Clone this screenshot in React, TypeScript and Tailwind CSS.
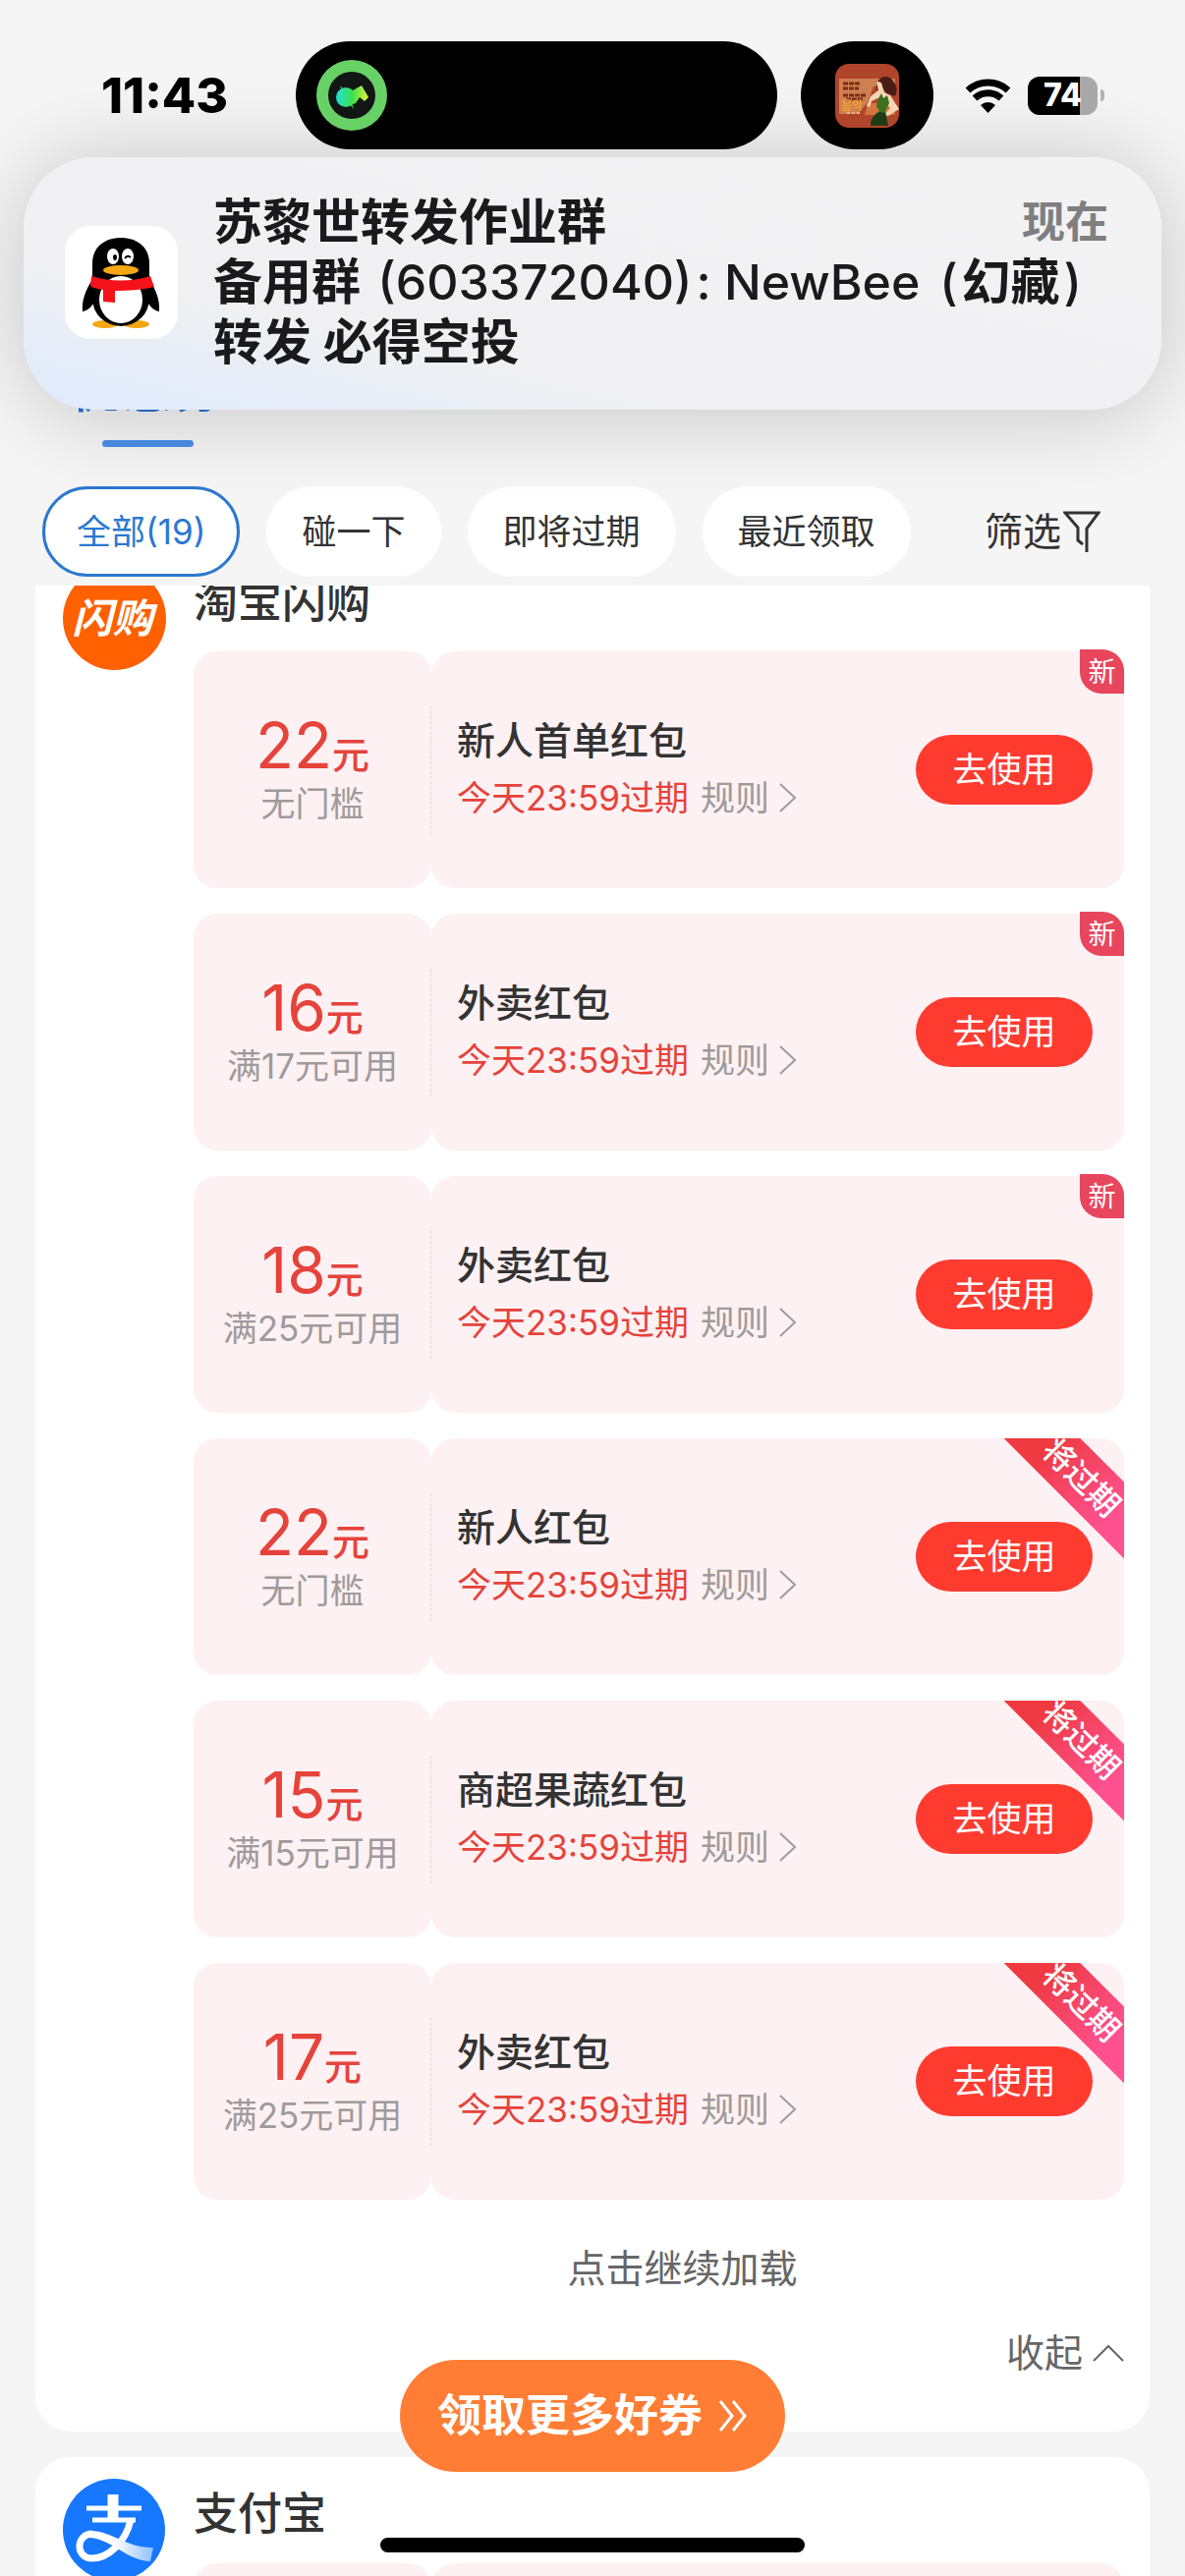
import { useState } from "react";

type Coupon = {
  amount: number;
  condition: string;
  title: string;
  tag: "new" | "expiring";
};

const coupons: Coupon[] = [
  { amount: 22, condition: "无门槛", title: "新人首单红包", tag: "new" },
  { amount: 16, condition: "满17元可用", title: "外卖红包", tag: "new" },
  { amount: 18, condition: "满25元可用", title: "外卖红包", tag: "new" },
  { amount: 22, condition: "无门槛", title: "新人红包", tag: "expiring" },
  { amount: 15, condition: "满15元可用", title: "商超果蔬红包", tag: "expiring" },
  { amount: 17, condition: "满25元可用", title: "外卖红包", tag: "expiring" },
];

const filters = ["全部(19)", "碰一下", "即将过期", "最近领取"];

function StatusBar() {
  return (
    <div className="relative z-20 flex items-center pt-[42px] pl-[103px] pr-[82px]">
      <div className="w-[198px] text-[50px] leading-[56px] font-extrabold text-black">11:43</div>

      {/* Dynamic island */}
      <div className="flex h-[110px] flex-1 items-center rounded-full bg-black pl-[21px]">
        <svg viewBox="0 0 72 72" className="size-[72px]">
          <defs>
            <linearGradient id="fish" x1="20" x2="54" gradientUnits="userSpaceOnUse">
              <stop offset="0" stopColor="#1fe0d8" />
              <stop offset="0.5" stopColor="#3fe04a" />
              <stop offset="1" stopColor="#f0f53a" />
            </linearGradient>
          </defs>
          <circle cx="36" cy="36" r="36" fill="#68d166" />
          <circle cx="36" cy="36" r="24" fill="#121614" />
          <g fill="url(#fish)">
            <circle cx="30" cy="38" r="10" />
            <path d="M34 32l3-1 9-5 7 12-4 4-5-4-4 6-6 2z" />
            <path d="M24 26l5 6h-3zM38 50l-5-6h3z" />
          </g>
        </svg>
      </div>
      <div className="ml-6 flex h-[110px] w-[135px] items-center justify-center rounded-full bg-black">
        <svg viewBox="0 0 65 65" className="size-[65px] rounded-[14px]">
          <rect width="65" height="65" fill="#b0452c" />
          <path d="M4 15h57v6l-22 2-6 16-10 12H4z" fill="#cd8050" />
          <path d="M33 40h28v12H30z" fill="#d4743f" />
          <path d="M8 20h18M8 25h16M8 32h24M11 36h18" stroke="#7d2b1d" strokeWidth="3" strokeDasharray="5 1" />
          <text x="6" y="47" fontSize="12" fontWeight="700" fill="#f0a233" fontFamily="Noto Sans CJK KR, sans-serif">
            음악
          </text>
          <path d="M12 50h14" stroke="#e8b08a" strokeWidth="2" strokeDasharray="3 2" />
          <path d="M44 17c3-6 13-5 15 1 5 5 4 10 2 15l-9-3-4-6-5 3c-2-3-1-7 1-10z" fill="#4a1d16" />
          <path d="M42 19c3-2 6 0 6 4l2 6 6 3 9 14-11 7-4-1 6-7-5-6-8-4-6 3-2 6-3-1 4-10 8-6z" fill="#f6d6b4" />
          <path d="M44 35l3-5 2 5 4-3 2 8-4 8 3 15H36c0-8 4-12 9-15l-3-5z" fill="#3c6f1f" />
          <path d="M36 63c0-8 4-11 9-14l6 1 3 13z" fill="#1f3a14" />
        </svg>
      </div>

      <svg viewBox="0 0 47 36" className="ml-8 h-9 w-[47px]">
        <path d="M3 13a30 30 0 0 1 41 0" fill="none" stroke="#000" strokeWidth="7" />
        <path d="M10 21a20 20 0 0 1 27 0" fill="none" stroke="#000" strokeWidth="7" />
        <path d="M16 28a11 11 0 0 1 15 0l-7.500 8z" fill="#000" />
      </svg>
      <div className="ml-[17px] flex h-[39px] w-[71px] items-center justify-center rounded-xl bg-linear-to-r from-black from-75% to-[#a8a8a8] to-75% text-[32px] leading-none font-extrabold text-white">
        74
      </div>
      <div className="ml-[3px] h-3 w-1 rounded-r-full bg-[#b4b4b4]" />
    </div>
  );
}

function Notification() {
  return (
    <div className="absolute inset-x-6 top-[160px] z-10 flex items-center rounded-[72px] bg-linear-to-tr from-[#deeafd] via-[#f0f0f2] via-30% to-[#f3f3f4] pt-9 pr-[54px] pb-[38px] pl-[42px] shadow-[0_4px_90px_rgba(0,0,0,0.2)]">
      <svg viewBox="0 0 115 115" className="size-[115px] shrink-0 rounded-[26px] bg-white">
        <ellipse cx="41" cy="100" rx="13" ry="4" fill="#f5a613" />
        <ellipse cx="73" cy="100" rx="13" ry="4" fill="#f5a613" />
        <path d="M27 56c-6 10-10 20-9 31 6-1 11-6 15-16zM87 56c6 10 10 20 9 31-6-1-11-6-15-16z" fill="#000" />
        <ellipse cx="57" cy="74" rx="29" ry="28" fill="#000" />
        <path d="M28 60V38c0-16 12-26 29-26s29 10 29 26v22z" fill="#000" />
        <ellipse cx="57" cy="75" rx="22" ry="24" fill="#fff" />
        <ellipse cx="49" cy="31" rx="6" ry="8" fill="#fff" />
        <ellipse cx="64" cy="31" rx="6" ry="8" fill="#fff" />
        <ellipse cx="51" cy="32" rx="2" ry="3" fill="#000" />
        <path d="M61 33q3-4 6-1" fill="none" stroke="#000" strokeWidth="2" />
        <ellipse cx="57" cy="45" rx="18" ry="5" fill="#f5a613" />
        <path d="M27 51q30 9 60 0l4 11q-16 4-40 4v12l-12-1V65q-8-1-13-4z" fill="#f5121a" />
      </svg>
      <div className="ml-9 flex-1 text-[50px] leading-[61px] font-bold text-[#1a1a1c]">
        <div className="flex items-center justify-between">
          <h2>苏黎世转发作业群</h2>
          <span className="text-[44px] font-semibold text-[#7f7f81]">现在</span>
        </div>
        <p>
          备用群
          <span className="pr-1 pl-1 font-medium"> (603372040)</span>
          <span className="pr-2 font-medium">: NewBee</span> <span className="font-medium">(</span>
          <span className="px-1">幻藏</span>
          <span className="font-medium">)</span>
          <br />
          转发 必得空投
        </p>
      </div>
    </div>
  );
}

function CouponCard({ coupon }: { coupon: Coupon }) {
  return (
    <li className="relative flex h-[241px]">
      <div className="flex w-[242px] flex-col items-center justify-center rounded-3xl bg-[#fdf1f3] pt-1">
        <div className="flex items-baseline text-[#e5433b]">
          <span className="text-[64px] leading-[64px]">{coupon.amount}</span>
          <span className="text-[38px] leading-none font-medium">元</span>
        </div>
        <div className="text-[35px] leading-[54px] text-[#9f9a9b]">{coupon.condition}</div>
      </div>

      <div className="relative flex flex-1 items-center justify-between overflow-hidden rounded-3xl bg-[#fdf1f3] pr-8 pl-[26px]">
        <div className="pb-[2px]">
          <h3 className="text-[39px] leading-[58px] font-medium text-[#333]">{coupon.title}</h3>
          <div className="flex items-center text-[35px] leading-[58px]">
            <span className="text-[#e5433b]">今天23:59过期</span>
            <a href="#rules" className="ml-3 flex items-center gap-[10px] text-[#9f9a9b]">
              规则
              <svg viewBox="0 0 18 30" className="h-[30px] w-[18px]">
                <path d="M1 1l15 14L1 29" fill="none" stroke="currentColor" strokeWidth="2" />
              </svg>
            </a>
          </div>
        </div>
        <button className="h-[71px] w-[180px] rounded-full bg-[#ff3b30] text-[35px] text-white">去使用</button>

        {coupon.tag === "expiring" && (
          <span className="absolute top-[14px] -right-[78px] flex h-[55px] w-[240px] rotate-45 items-center justify-center bg-linear-to-r from-[#ee3a40] from-30% to-[#ff5090] to-70% pr-1 text-[32px] font-medium text-white">
            将过期
          </span>
        )}
      </div>

      <div className="absolute top-14 left-[241px] h-[130px] border-l border-dashed border-[#e2d6d8]" />
      {coupon.tag === "new" && (
        <span className="absolute -top-[2px] right-0 flex size-[45px] items-center justify-center rounded-tr-[22px] rounded-bl-[22px] bg-[#e8465c] text-[28px] text-white">
          新
        </span>
      )}
    </li>
  );
}

function AlipayLogo() {
  return (
    <svg viewBox="0 0 105 105" className="size-[105px] shrink-0">
      <defs>
        <linearGradient id="ribbon" x1="0" x2="1">
          <stop offset="0.4" stopColor="#fff" />
          <stop offset="1" stopColor="#8fc0ff" />
        </linearGradient>
      </defs>
      <circle cx="52" cy="52" r="52" fill="#1677ff" />
      <g fill="none" stroke="#fff">
        <path d="M51 16v26" strokeWidth="11" />
        <path d="M24 30h56M30 42h44" strokeWidth="5" />
        <path d="M69 42C64 64 46 82 28 81C12 79 14 56 30 56" strokeWidth="7" />
      </g>
      <path d="M28 53c22 0 38 18 64 17l-3 14C66 84 48 60 26 60z" fill="url(#ribbon)" />
    </svg>
  );
}

export default function App() {
  const [active, setActive] = useState(filters[0]);

  return (
    <main className="relative flex h-screen flex-col overflow-hidden bg-[#f5f5f5] font-['Inter','Noto_Sans_CJK_SC',sans-serif]">
      <StatusBar />
      <Notification />

      <div className="flex px-[72px] pt-[215px]">
        <a href="#coupons" className="flex flex-col items-center gap-[21px] text-[52px] leading-[60px] font-medium text-[#2672cf]">
          优惠券
          <span className="h-[7px] w-[93px] rounded-full bg-[#4a8fe8]" />
        </a>
      </div>

      {/* Filters */}
      <div className="flex items-center gap-[27px] pt-10 pr-[86px] pb-[9px] pl-[43px] text-[35px] text-[#333]">
        {filters.map((name) => (
          <button
            key={name}
            onClick={() => setActive(name)}
            className={`h-[92px] rounded-full bg-white ${
              active === name ? "border-[3px] border-[#2b78d0] px-8 text-[#2b78d0]" : "px-9"
            }`}
          >
            {name}
          </button>
        ))}
        <button className="ml-auto flex items-center gap-[2px] text-[39px]">
          筛选
          <svg viewBox="0 0 38 42" className="h-[42px] w-[38px]">
            <path
              d="M20 34l-5-4V17L2 2h34L24 18v24"
              fill="none"
              stroke="currentColor"
              strokeWidth="3"
            />
          </svg>
        </button>
      </div>

      {/* Store list, scrolled a little under the filters */}
      <div className="min-h-0 flex-1 overflow-hidden px-9">
        <section className="-mt-[41px] flex gap-7 rounded-[36px] bg-white pt-[22px] pr-[26px] pl-7">
          <div className="flex size-[105px] shrink-0 items-center justify-center rounded-full bg-[#ff6000] pr-1 text-[41px] font-bold text-white italic">
            闪购
          </div>
          <div className="flex-1">
            <h2 className="pt-[6px] text-[45px] leading-[60px] font-medium text-[#333]">淘宝闪购</h2>
            <ul className="mt-5 flex flex-col gap-[26px]">
              {coupons.map((coupon, i) => (
                <CouponCard key={i} coupon={coupon} />
              ))}
            </ul>
            <button className="mt-10 block w-full pl-12 text-[39px] leading-[60px] text-[#666]">点击继续加载</button>
            <button className="mt-[26px] mb-[50px] ml-auto flex items-center gap-[10px] text-[39px] leading-[60px] text-[#666]">
              收起
              <svg viewBox="0 0 32 18" className="h-[18px] w-8">
                <path d="M1 17L16 2l15 15" fill="none" stroke="currentColor" strokeWidth="2" />
              </svg>
            </button>
          </div>
        </section>

        <section className="mt-[26px] flex gap-7 rounded-[36px] bg-white pt-[22px] pr-[26px] pl-7">
          <AlipayLogo />
          <div className="flex-1">
            <h2 className="pt-[6px] text-[45px] leading-[60px] font-medium text-[#333]">支付宝</h2>
            <div className="mt-5 flex h-[241px]">
              <div className="w-[242px] rounded-3xl bg-[#fdf1f3]" />
              <div className="flex-1 rounded-3xl bg-[#fdf1f3]" />
            </div>
          </div>
        </section>
      </div>

      <button className="absolute bottom-[106px] left-1/2 flex h-[114px] w-[392px] -translate-x-1/2 items-center justify-center gap-4 rounded-full bg-[#ff7d35] text-[45px] font-semibold text-white">
        领取更多好券
        <svg viewBox="0 0 30 34" className="h-[34px] w-[30px]">
          <path d="M2 2l12 15L2 32M15 2l12 15-12 15" fill="none" stroke="currentColor" strokeWidth="3" />
        </svg>
      </button>
      <div className="absolute bottom-6 left-1/2 h-[15px] w-[432px] -translate-x-1/2 rounded-full bg-black" />
    </main>
  );
}
